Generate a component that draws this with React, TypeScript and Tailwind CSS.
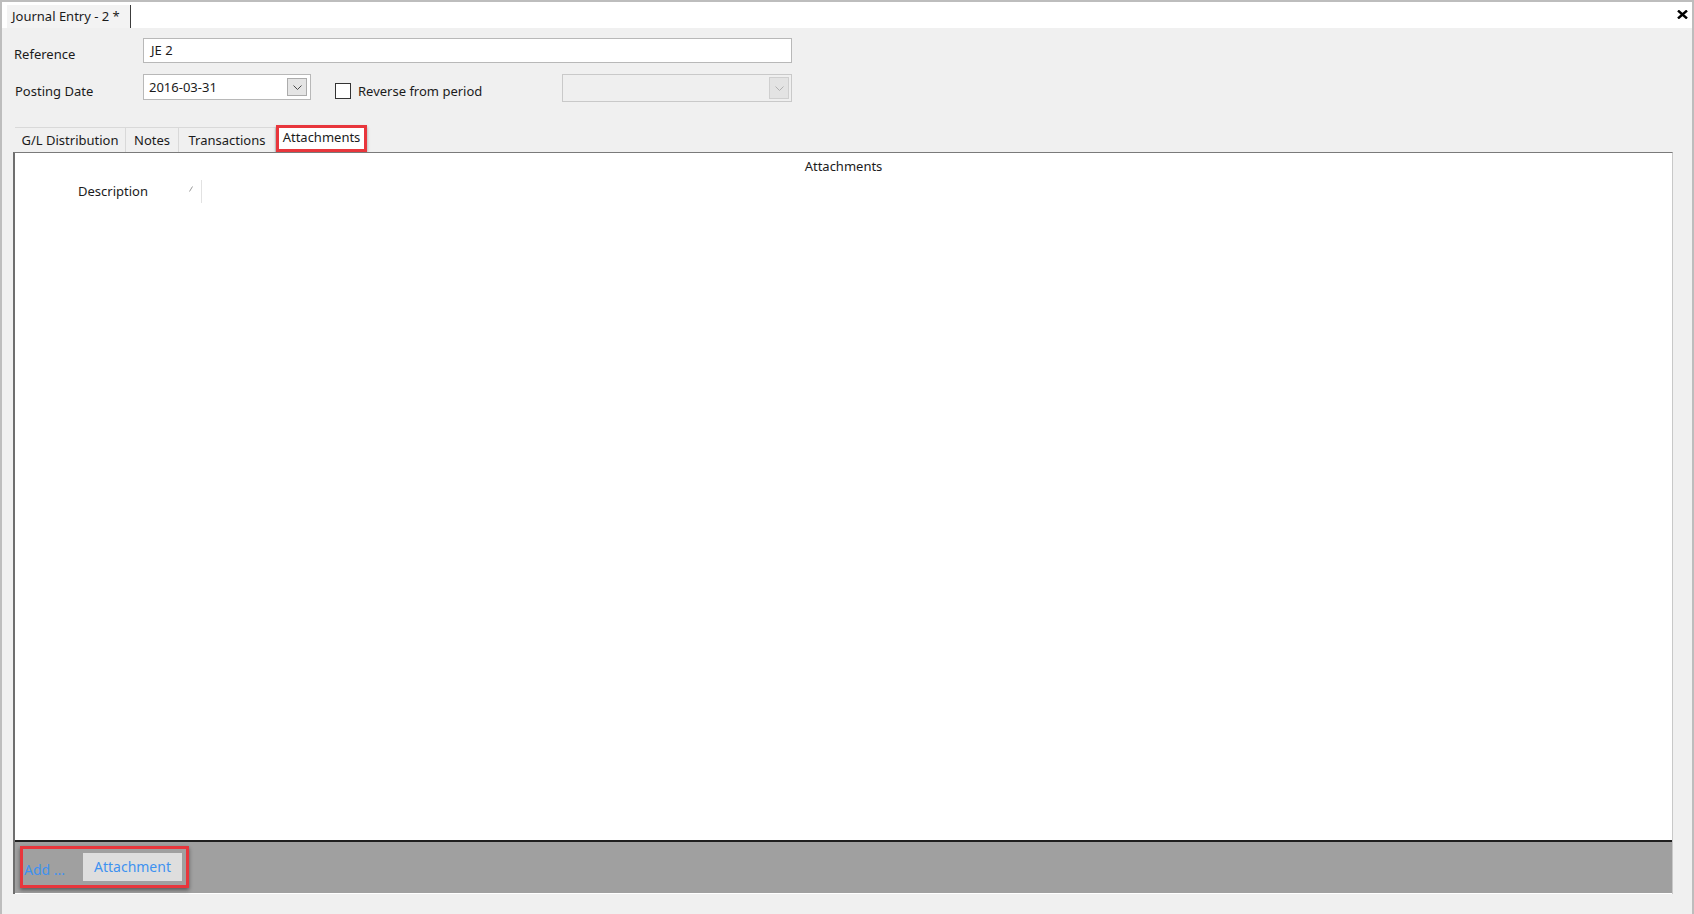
import React from 'react';

const Chevron = ({ color = '#4a4a4a' }: { color?: string }) => (
  <svg width="9" height="5" viewBox="0 0 9 5" fill="none">
    <path d="M0.5 0.5 L4.5 4.5 L8.5 0.5" stroke={color} strokeWidth="1" />
  </svg>
);

const tabs = ['G/L Distribution', 'Notes', 'Transactions'];
const tabWidths = ['w-[111px]', 'w-[53px]', 'w-[97px]'];

const App = () => {
  return (
    <div
      className="w-[1694px] h-[914px] bg-[#f0f0f0] border-l-2 border-t-2 border-r-2 border-[#bdbdbd] flex flex-col text-[13px] text-[#1b1b1b] overflow-hidden"
      style={{ fontFamily: '"Noto Sans", "Liberation Sans", sans-serif' }}
    >
      {/* document tab strip */}
      <div className="h-[26px] bg-white flex items-end justify-between pl-[5px] pr-[4px] shrink-0">
        <div className="w-[124px] h-[23px] bg-[#f3f3f3] border-r border-[#3c3c3c] flex items-center pl-[5px] leading-none">
          Journal Entry - 2 *
        </div>
        <div className="h-full flex items-center pb-[2px]">
          <svg width="11" height="9" viewBox="0 0 11 9">
            <path d="M1 0.5 L10 8.5 M10 0.5 L1 8.5" stroke="#000" strokeWidth="2.4" />
          </svg>
        </div>
      </div>

      {/* header form */}
      <div className="flex items-start mt-[10px] h-[25px] shrink-0">
        <div className="w-[141px] pl-[12px] pt-[8px] leading-[17px]">Reference</div>
        <div className="w-[649px] h-[25px] bg-white border border-[#b8b8b8] flex items-center pl-[7px] leading-none">JE 2</div>
      </div>
      <div className="flex items-start mt-[11px] shrink-0">
        <div className="w-[141px] pl-[13px] pt-[9px] leading-[17px]">Posting Date</div>
        <div className="w-[168px] h-[26px] bg-white border border-[#b8b8b8] flex items-center justify-between pl-[5px] pr-[3px] leading-none">
          <span>2016-03-31</span>
          <div className="w-[20px] h-[18px] bg-[#e5e5e5] border border-[#acacac] flex items-center justify-center">
            <Chevron />
          </div>
        </div>
        <div className="w-[251px] flex items-center pl-[24px] pt-[9px]">
          <div className="w-[16px] h-[16px] bg-white border border-[#333]" />
          <span className="ml-[7px] leading-none">Reverse from period</span>
        </div>
        <div className="w-[230px] h-[28px] bg-[#efefef] border border-[#c9c9c9] flex items-center justify-end pr-[2px]">
          <div className="w-[20px] h-[22px] bg-[#e3e3e3] border border-[#cfcfcf] flex items-center justify-center">
            <Chevron color="#b0b0b0" />
          </div>
        </div>
      </div>

      {/* tabs */}
      <div className="flex items-end h-[27px] mt-[23px] ml-[13px] shrink-0">
        {tabs.map((t, i) => (
          <div
            key={t}
            className={`${tabWidths[i]} h-[25px] border-t border-r border-[#d9d9d9] bg-[#f0f0f0] flex items-center justify-center leading-none pt-[1px]`}
          >
            {t}
          </div>
        ))}
        <div className="w-[91px] h-[27px] bg-white border-[3px] border-[#e8363c] shadow-[0_2px_3px_rgba(0,0,0,0.35)] flex items-center justify-center leading-none pb-[3px]">
          Attachments
        </div>
      </div>

      {/* tab body */}
      <div className="flex-1 ml-[11px] mr-[19px] mb-[20px] bg-white border-t border-l-2 border-t-[#7a7a7a] border-l-[#6e6e6e] border-r border-r-[#c8c8c8] flex flex-col min-h-0">
        <div className="h-[26px] flex items-center justify-center leading-none shrink-0">Attachments</div>
        <div className="h-[25px] flex items-center shrink-0">
          <div className="w-[187px] h-[23px] border-r border-[#e2e2e2] flex items-center justify-between pl-[63px] pr-[8px] leading-none">
            <span>Description</span>
            <svg width="4" height="6" viewBox="0 0 4 6" className="mb-[6px]">
              <path d="M0.5 5.5 L3.5 0.5" stroke="#9a9a9a" strokeWidth="1" />
            </svg>
          </div>
        </div>
        <div className="flex-1" />
        <div className="h-[54px] border-t-2 border-[#1f1f1f] bg-[#a0a0a0] border-b border-b-white shrink-0 pl-[5px] pt-[4px]">
          <div className="w-[169px] h-[42px] border-[3px] border-[#e8363c] shadow-[0_2px_4px_rgba(0,0,0,0.45)] flex items-center text-[14px] text-[#3e92f0] leading-none">
            <span className="w-[60px] pl-[1px] pt-[5px]">Add ...</span>
            <div className="w-[99px] h-[28px] bg-[#dedede] flex items-center justify-center">Attachment</div>
          </div>
        </div>
      </div>
    </div>
  );
};

export default App;
